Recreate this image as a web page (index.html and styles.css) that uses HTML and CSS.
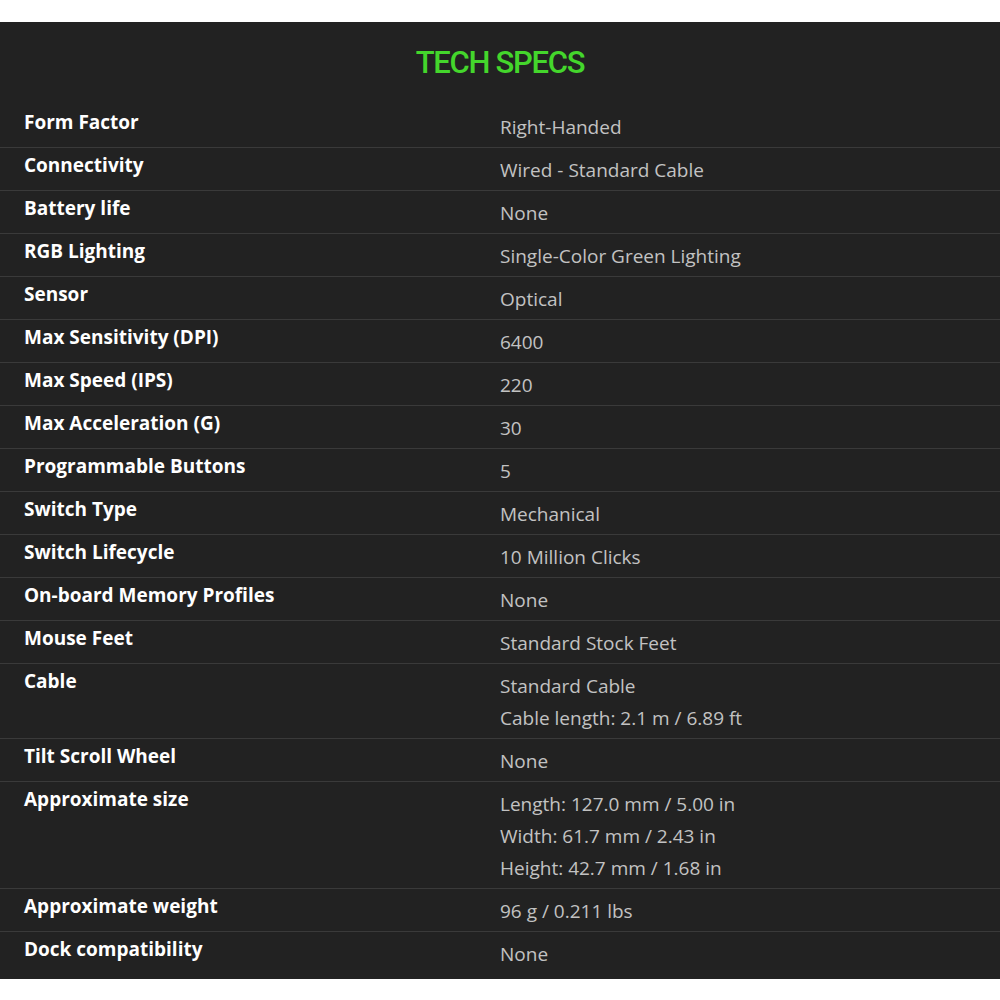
FILE: index.html
```html
<html>
<head>
<meta http-equiv="Content-Type" content="text/html; charset=UTF-8">
<link rel="stylesheet" href="styles.css">
</head>
<body>
<section class="specs">
    <h2 class="specs__title">TECH SPECS</h2>
    <div class="specs__list">
        <div class="spec"><div class="spec__name">Form Factor</div><div class="spec__value">Right-Handed</div></div>
        <div class="spec"><div class="spec__name">Connectivity</div><div class="spec__value">Wired - Standard Cable</div></div>
        <div class="spec"><div class="spec__name">Battery life</div><div class="spec__value">None</div></div>
        <div class="spec"><div class="spec__name">RGB Lighting</div><div class="spec__value">Single-Color Green Lighting</div></div>
        <div class="spec"><div class="spec__name">Sensor</div><div class="spec__value">Optical</div></div>
        <div class="spec"><div class="spec__name">Max Sensitivity (DPI)</div><div class="spec__value">6400</div></div>
        <div class="spec"><div class="spec__name">Max Speed (IPS)</div><div class="spec__value">220</div></div>
        <div class="spec"><div class="spec__name">Max Acceleration (G)</div><div class="spec__value">30</div></div>
        <div class="spec"><div class="spec__name">Programmable Buttons</div><div class="spec__value">5</div></div>
        <div class="spec"><div class="spec__name">Switch Type</div><div class="spec__value">Mechanical</div></div>
        <div class="spec"><div class="spec__name">Switch Lifecycle</div><div class="spec__value">10 Million Clicks</div></div>
        <div class="spec"><div class="spec__name">On-board Memory Profiles</div><div class="spec__value">None</div></div>
        <div class="spec"><div class="spec__name">Mouse Feet</div><div class="spec__value">Standard Stock Feet</div></div>
        <div class="spec"><div class="spec__name">Cable</div><div class="spec__value">Standard Cable<br>Cable length: 2.1 m / 6.89 ft</div></div>
        <div class="spec"><div class="spec__name">Tilt Scroll Wheel</div><div class="spec__value">None</div></div>
        <div class="spec"><div class="spec__name">Approximate size</div><div class="spec__value">Length: 127.0 mm / 5.00 in<br>Width: 61.7 mm / 2.43 in<br>Height: 42.7 mm / 1.68 in</div></div>
        <div class="spec"><div class="spec__name">Approximate weight</div><div class="spec__value">96 g / 0.211 lbs</div></div>
        <div class="spec"><div class="spec__name">Dock compatibility</div><div class="spec__value">None</div></div>
    </div>
</section>
</body>
</html>
```

FILE: styles.css
```css
body {
    margin: 0;
    background-color: #fff;
    font-family: "Open Sans", "Noto Sans", sans-serif;
}

/* Tech specs block */
.specs {
    margin-top: 22px;
    padding: 21px 0 5px 0;
    background-color: #222;
}

.specs__title {
    margin: 0 0 22px 0;
    font-family: Roboto, "Noto Sans", sans-serif;
    font-size: 31px;
    font-weight: 500;
    line-height: 40px;
    letter-spacing: -1.3px;
    text-align: center;
    color: #44d62c;
}

.spec {
    display: grid;
    grid-template-columns: 1fr 1fr;
    padding: 5px 0 4px 0;
}
.spec + .spec {
    border-top: 1px solid #3a3a3a;
}

.spec__name {
    padding-left: 24px;
    font-size: 19px;
    font-weight: 700;
    line-height: 24px;
    color: #fff;
}

.spec__value {
    padding-top: 1px;
    font-size: 19px;
    line-height: 32px;
    color: #c2c2c2;
}
```
